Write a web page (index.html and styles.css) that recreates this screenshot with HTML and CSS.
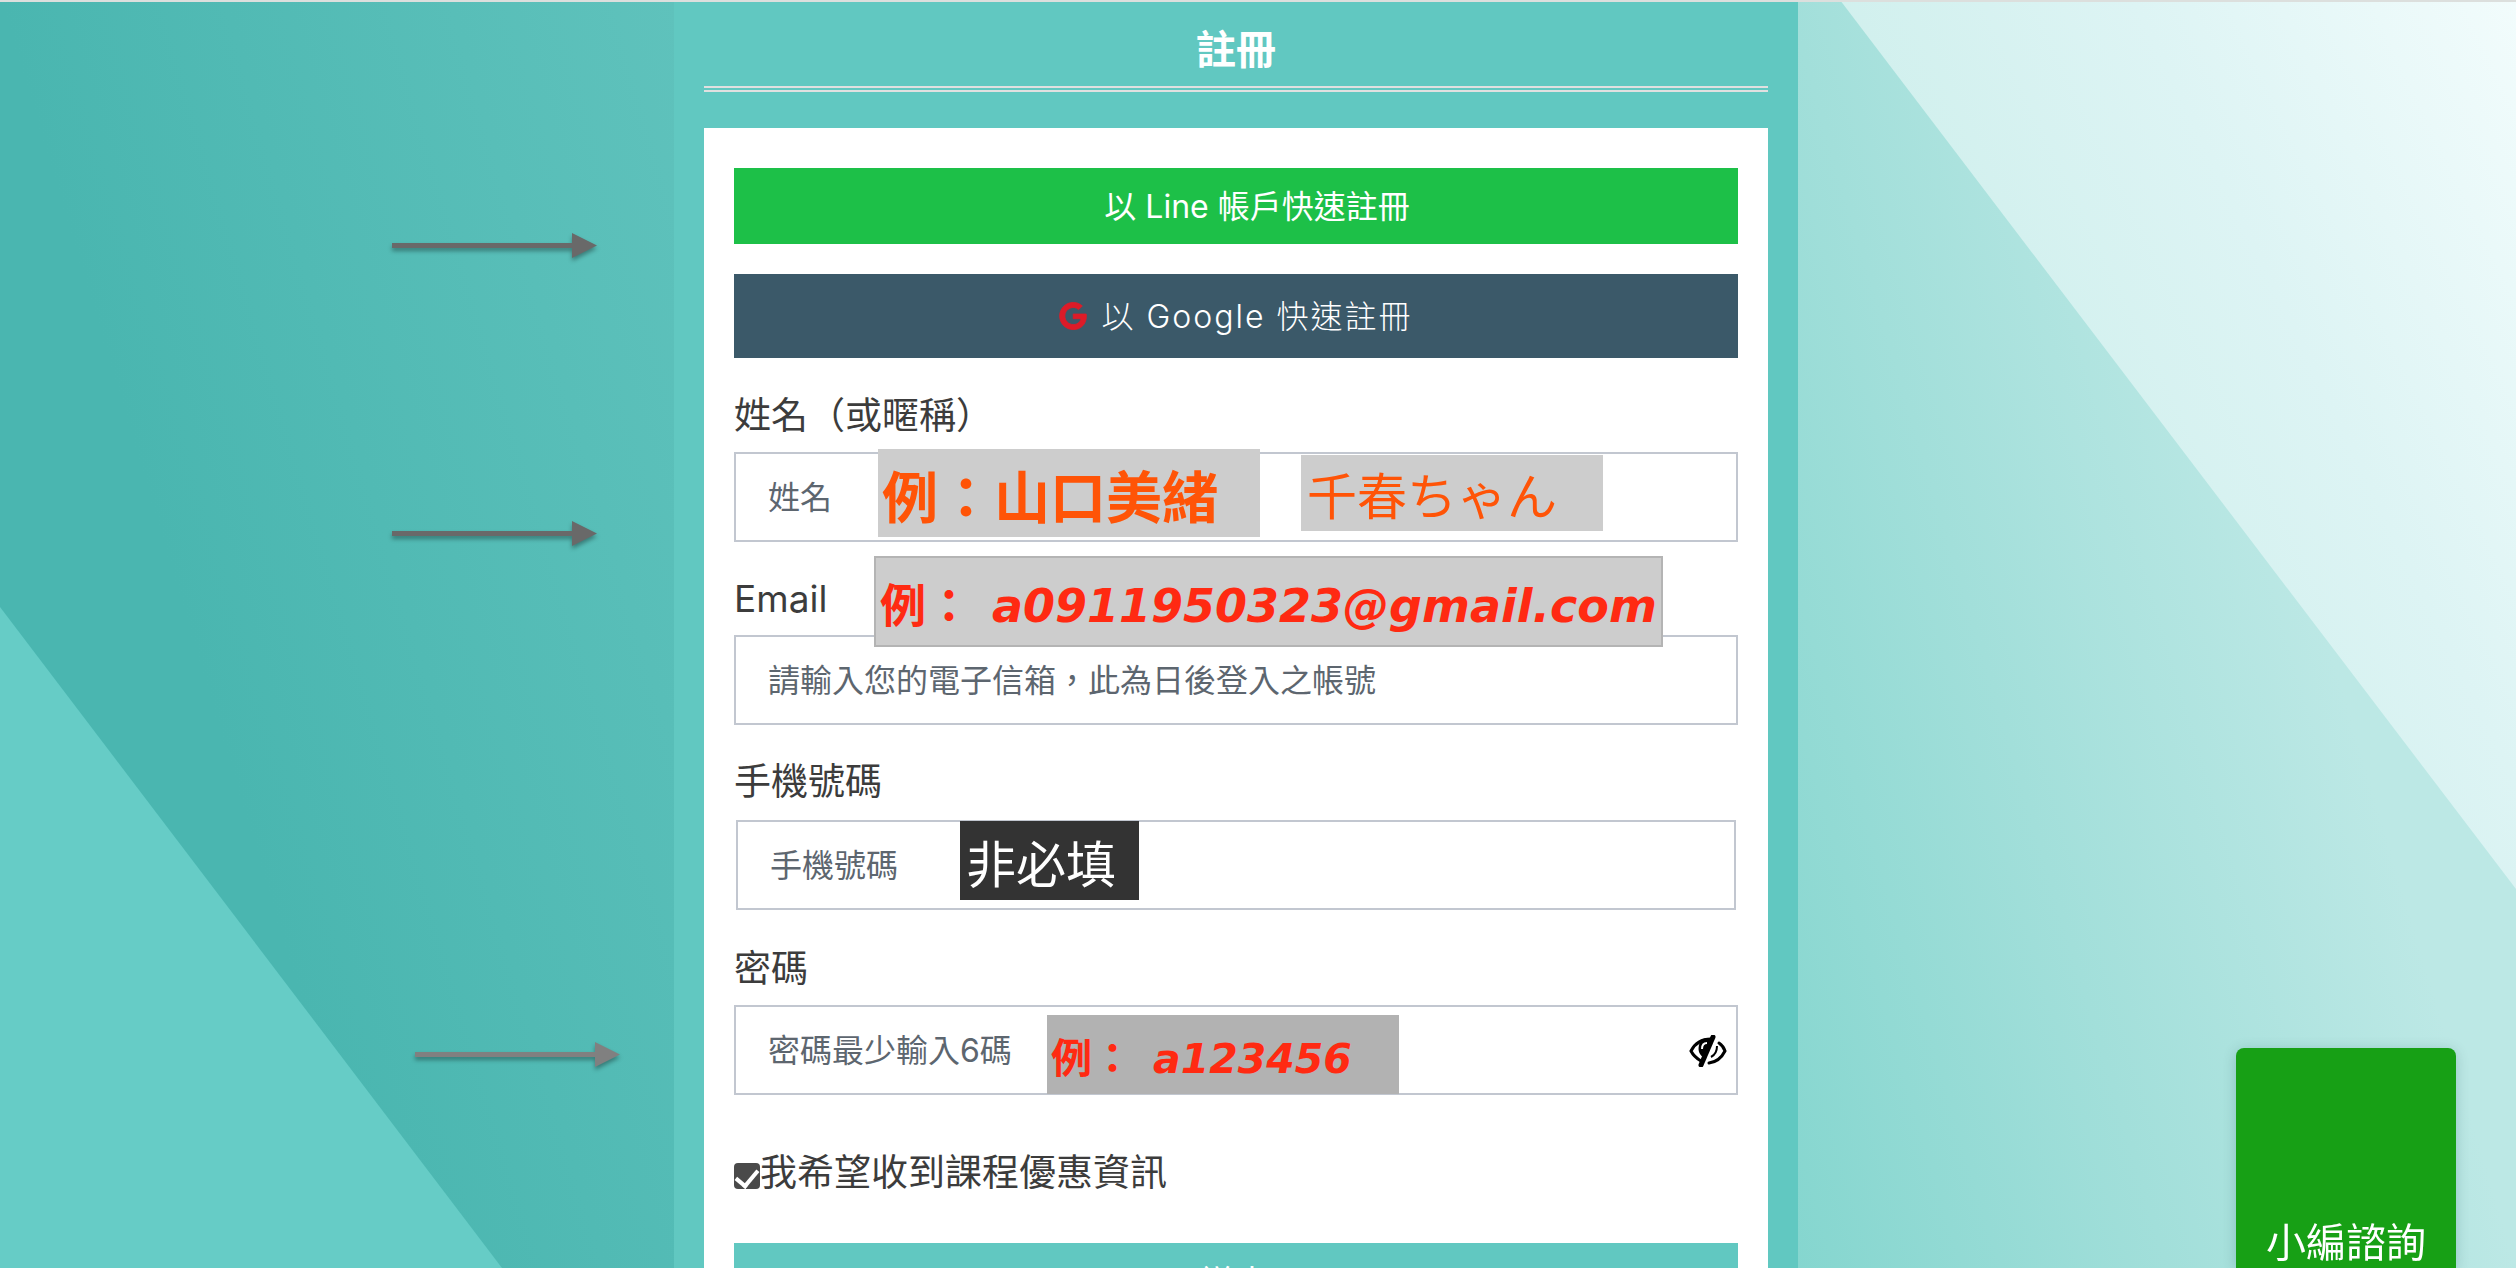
FILE: index.html
```html
<!DOCTYPE html>
<html lang="zh-Hant">
<head>
  <meta charset="UTF-8">
  <meta name="viewport" content="width=device-width, initial-scale=1.0">
  <title>註冊</title>
  <link rel="stylesheet" href="styles.css">
</head>
<body>
  <!-- Diagonal background -->
  <svg class="backdrop" viewBox="0 0 2516 1268" preserveAspectRatio="none" aria-hidden="true">
    <defs>
      <linearGradient id="bg-main" gradientUnits="userSpaceOnUse" x1="0" y1="0" x2="2000" y2="-600">
        <stop offset="0" stop-color="#4ab6b0"/>
        <stop offset="0.31" stop-color="#5fc2bc"/>
        <stop offset="0.65" stop-color="#85d6cf"/>
        <stop offset="0.82" stop-color="#a2dfda"/>
        <stop offset="0.98" stop-color="#bce8e5"/>
      </linearGradient>
      <linearGradient id="bg-light" gradientUnits="userSpaceOnUse" x1="1900" y1="300" x2="2516" y2="0">
        <stop offset="0" stop-color="#ceefec"/>
        <stop offset="0.5" stop-color="#ddf4f4"/>
        <stop offset="1" stop-color="#f2fcfc"/>
      </linearGradient>
    </defs>
    <rect width="2516" height="1268" fill="url(#bg-main)"/>
    <path d="M0 607L502 1268H0z" fill="#66ccc6"/>
    <path d="M1840 0H2516V889z" fill="url(#bg-light)"/>
  </svg>

  <div class="page">
    <svg class="arrow arrow-line" viewBox="0 0 205 25" aria-hidden="true"><path d="M0 10H180V0L205 12.500L180 25V15H0z"/></svg>
    <svg class="arrow arrow-name" viewBox="0 0 205 25" aria-hidden="true"><path d="M0 10H180V0L205 12.500L180 25V15H0z"/></svg>
    <svg class="arrow arrow-password" viewBox="0 0 205 25" aria-hidden="true"><path d="M0 10H180V0L205 12.500L180 25V15H0z"/></svg>

    <main class="container">
      <h1>註冊</h1>

      <form class="card">
        <div class="social-buttons">
          <button type="button" class="btn btn-line"><span class="btn-icon"></span>以 Line 帳戶快速註冊</button>
          <button type="button" class="btn btn-google">
            <svg class="btn-icon" viewBox="0 0 488 512" aria-hidden="true"><path fill="#dd1b28" stroke="#dd1b28" stroke-width="16" d="M488 261.8C488 403.3 391.1 504 248 504 110.8 504 0 393.2 0 256S110.8 8 248 8c66.8 0 123 24.5 166.3 64.900l-67.500 64.900C258.500 52.600 94.300 116.600 94.300 256c0 86.500 69.100 156.600 153.700 156.600 98.200 0 135-70.400 140.800-106.900H248v-85.300h236.100c2.300 12.700 3.900 24.900 3.900 41.400z"/></svg>以 Google 快速註冊
          </button>
        </div>

        <div class="field">
          <label for="name">姓名（或暱稱）</label>
          <div class="control">
            <input type="text" id="name" placeholder="姓名">
            <span class="note note-name">例：山口美緒</span>
            <span class="note note-nickname">千春ちゃん</span>
          </div>
        </div>

        <div class="field">
          <label for="email">Email</label>
          <div class="control">
            <input type="email" id="email" placeholder="請輸入您的電子信箱，此為日後登入之帳號">
            <span class="note note-email">例：<em>a0911950323@gmail.com</em></span>
          </div>
        </div>

        <div class="field">
          <label for="phone">手機號碼</label>
          <div class="control control-inset">
            <input type="tel" id="phone" placeholder="手機號碼">
            <span class="note note-phone">非必填</span>
          </div>
        </div>

        <div class="field">
          <label for="password">密碼</label>
          <div class="control">
            <input type="password" id="password" placeholder="密碼最少輸入6碼">
            <span class="note note-password">例：<em>a123456</em></span>
            <button type="button" class="toggle-password" aria-label="顯示密碼">
              <svg viewBox="0 0 38 32" aria-hidden="true">
                <path d="M12 26C7 23 4 20 2 16C6 8 13 4 22 4" fill="none" stroke="#000" stroke-width="3"/>
                <path d="M30 8C33 10 35 13 36 16C33 22 28 27 20 28" fill="none" stroke="#000" stroke-width="3" stroke-linecap="round"/>
                <path d="M12 5C8 12 9 19 14 22L23 4C19 3 15 3 12 5z"/>
                <path d="M24 2L12 30" fill="none" stroke="#000" stroke-width="5" stroke-linecap="round"/>
                <path d="M28 11C28 16 26 20 22 22" fill="none" stroke="#000" stroke-width="2"/>
                <path d="M13 14C13 10 15 8 18 8" fill="none" stroke="#fff" stroke-width="2"/>
              </svg>
            </button>
          </div>
        </div>

        <div class="subscribe">
          <input type="checkbox" id="subscribe" checked>
          <label for="subscribe">我希望收到課程優惠資訊</label>
        </div>

        <button type="submit" class="btn btn-submit">送出</button>
      </form>
    </main>
  </div>

  <a class="consult" href="#">小編諮詢</a>
</body>
</html>
```

FILE: styles.css
```css
* {
  box-sizing: border-box;
}

body {
  margin: 0;
  font-family: Inter, "Noto Sans CJK TC", sans-serif;
  color: #3c3c3c;
}

.backdrop {
  position: fixed;
  top: 0;
  left: 0;
  width: 100%;
  height: 100%;
}

.page {
  position: relative;
  height: 100vh;
  padding-right: 44px;
  border-top: 2px solid #dcdfdd;
  overflow-y: auto;
  scrollbar-width: none;
}

.container {
  max-width: 1124px;
  margin: 0 auto;
  padding: 0 30px 40px;
  background-color: #61c8c1;
}

h1 {
  margin: 0 0 36px;
  padding: 20px 0 8px;
  border-bottom: 6px double #e0e0e0;
  color: #fff;
  font-size: 40px;
  line-height: 56px;
  font-weight: 700;
  text-align: center;
}

.card {
  padding: 40px 30px;
  background-color: #fff;
}

/* Buttons */
.btn {
  display: flex;
  align-items: center;
  justify-content: center;
  width: 100%;
  height: 76px;
  padding: 0 0 4px;
  border: none;
  color: #fff;
  font-family: inherit;
  font-size: 32px;
  cursor: pointer;
}

.btn-icon {
  width: 28px;
  height: 28px;
  margin: 4px 14px 0 0;
  overflow: visible;
}

.btn-line {
  background-color: #1dc048;
}

.btn-google {
  height: 84px;
  background-color: #3b5969;
  font-weight: 300;
  letter-spacing: 2px;
}

.btn-submit {
  background-color: #61c8c1;
  letter-spacing: 2px;
}

.social-buttons {
  display: flex;
  flex-direction: column;
  gap: 30px;
  margin-bottom: 28px;
}

/* Fields */
.field {
  margin-bottom: 27px;
}

.field label,
.subscribe label {
  font-size: 37px;
  line-height: 56px;
}

.field label {
  display: block;
  padding-top: 2px;
  margin-bottom: 8px;
}

.control {
  position: relative;
}

.control-inset {
  padding: 2px;
}

.control input {
  display: block;
  width: 100%;
  height: 90px;
  padding: 0 32px;
  border: 2px solid #c2c7d0;
  border-radius: 0;
  background-color: #fff;
  font-family: inherit;
  font-size: 32px;
}

.control input::placeholder {
  color: #5d666f;
  opacity: 1;
}

.toggle-password {
  position: absolute;
  top: 30px;
  right: 11px;
  width: 38px;
  height: 32px;
  padding: 0;
  border: none;
  background: none;
  cursor: pointer;
}

.toggle-password svg {
  display: block;
}

/* Example notes laid over the fields */
.note {
  position: absolute;
  display: flex;
  align-items: center;
  padding-left: 4px;
  background-color: #cdcdcd;
  color: #ff2a12;
  font-weight: 700;
  white-space: nowrap;
  pointer-events: none;
}

.note em {
  margin-left: 20px;
  padding-top: 8px;
  font-family: "DejaVu Sans", sans-serif;
}

.note-name {
  top: -3px;
  left: 144px;
  width: 382px;
  height: 88px;
  color: #ff5407;
  font-size: 56px;
}

.note-nickname {
  top: 3px;
  left: 567px;
  width: 302px;
  height: 76px;
  padding-left: 6px;
  color: #ff5407;
  font-family: "Noto Sans CJK JP", sans-serif;
  font-size: 50px;
  font-weight: 400;
}

.note-email {
  top: -79px;
  left: 140px;
  width: 789px;
  height: 91px;
  border: 2px solid #b4b4b4;
  font-size: 46px;
}

.note-phone {
  top: 3px;
  left: 226px;
  width: 179px;
  height: 79px;
  padding-left: 6px;
  background-color: #333;
  color: #fff;
  font-size: 50px;
  font-weight: 400;
}

.note-password {
  top: 10px;
  left: 313px;
  width: 352px;
  height: 79px;
  background-color: #b2b2b2;
  font-size: 41px;
}

/* Checkbox row */
.subscribe {
  display: flex;
  align-items: center;
  margin: 50px 0 42px;
}

.subscribe input {
  appearance: none;
  display: flex;
  justify-content: center;
  width: 26px;
  height: 26px;
  margin: 6px 0 0;
  border-radius: 4px;
  background-color: #4a4a4a;
}

.subscribe input:checked::after {
  content: "";
  flex: none;
  width: 10px;
  height: 18px;
  margin-top: 2px;
  border: solid #fff;
  border-width: 0 4px 4px 0;
  transform: rotate(40deg);
}

/* Arrows pointing at the form */
.arrow {
  position: absolute;
  width: 205px;
  height: 25px;
  fill: #696969;
  filter: drop-shadow(0 3px 2px rgba(0, 0, 0, 0.35));
  overflow: visible;
}

.arrow-line {
  top: 231px;
  left: 392px;
}

.arrow-name {
  top: 519px;
  left: 392px;
}

.arrow-password {
  top: 1040px;
  left: 415px;
  fill: #808080;
}

/* Floating contact button */
.consult {
  position: fixed;
  right: 60px;
  bottom: 0;
  width: 220px;
  height: 220px;
  padding-top: 167px;
  border-radius: 8px 8px 0 0;
  background-color: #17a015;
  box-shadow: 0 2px 14px rgba(0, 60, 60, 0.2);
  color: #fff;
  font-size: 40px;
  line-height: 56px;
  text-align: center;
  text-decoration: none;
}
```
